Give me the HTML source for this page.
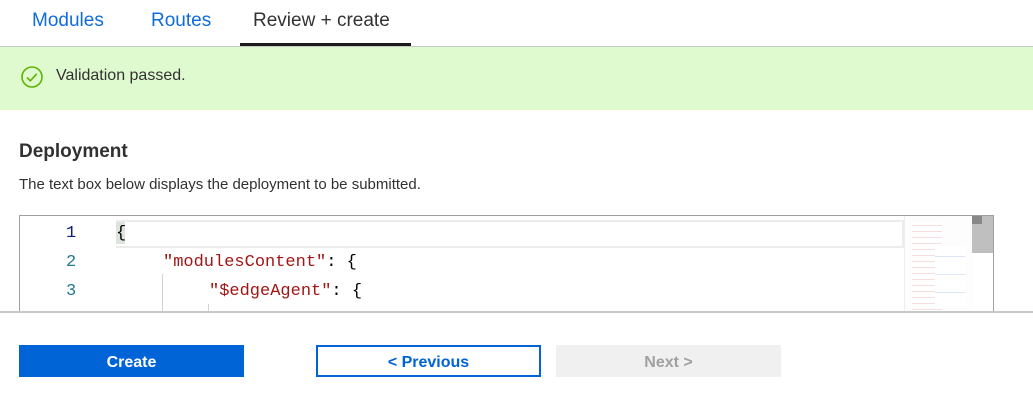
<!DOCTYPE html>
<html><head><style>
body{margin:0;width:1033px;height:405px;overflow:hidden;background:#fff;font-family:"Liberation Sans",sans-serif;position:relative}
.a{position:absolute}
.tab{position:absolute;top:10px;font-size:19px;color:#0f6cdb}
.mono{font-family:"Liberation Mono",monospace;font-size:17px}
.btn{font-weight:600}
</style></head><body>
<div class="tab" style="left:32px">Modules</div>
<div class="tab" style="left:151px">Routes</div>
<div class="tab" style="left:253px;color:#333">Review + create</div>
<div class="a" style="left:0;top:46px;width:1033px;height:1px;background:#c8c8c8"></div>
<div class="a" style="left:240px;top:43px;width:171px;height:3px;background:#1b1b1b"></div>
<div class="a" style="left:0;top:47px;width:1033px;height:63px;background:#e0fad0"></div>
<svg class="a" style="left:20px;top:65px" width="24" height="24"><circle cx="12" cy="12" r="10" fill="none" stroke="#5db300" stroke-width="1.6"/><path d="M7 12.5l3.3 3.3 6.5-7" fill="none" stroke="#5db300" stroke-width="1.6"/></svg>
<div class="a" style="left:56px;top:67px;font-size:16px;color:#323130">Validation passed.</div>
<div class="a" style="left:19px;top:141px;font-size:19px;font-weight:bold;color:#323130">Deployment</div>
<div class="a" style="left:19px;top:176px;font-size:15px;color:#323130">The text box below displays the deployment to be submitted.</div>
<div class="a" style="left:19px;top:215px;width:973px;height:97px;border:1px solid #a0a0a0;border-bottom:none;overflow:hidden">
 <div class="a" style="left:96px;top:4px;width:786px;height:24px;border:2px solid #ececec;border-left:none;background:#fff"></div>
 <div class="a" style="left:96px;top:6px;width:9px;height:22px;background:#dde4dd"></div>
 <div class="a mono" style="left:46px;top:8px;color:#0b216f">1</div>
 <div class="a mono" style="left:46px;top:37px;color:#237893">2</div>
 <div class="a mono" style="left:46px;top:66px;color:#237893">3</div>
 <div class="a mono" style="left:96px;top:8px;color:#000">{</div>
 <div class="a mono" style="left:143px;top:37px;color:#a31515">"modulesContent"<span style="color:#000">: {</span></div>
 <div class="a mono" style="left:189px;top:66px;color:#a31515">"$edgeAgent"<span style="color:#000">: {</span></div>
 <div class="a" style="left:142px;top:58px;width:1px;height:50px;background:#d3d3d3"></div>
 <div class="a" style="left:188px;top:88px;width:1px;height:20px;background:#d3d3d3"></div>
 <div class="a" style="left:884px;top:0;width:68px;height:97px;background:#fdfdfd;border-left:1px solid #eee"></div>
 <div class="a" style="left:952px;top:0;width:21px;height:37px;background:#bfbfbf"></div>
 <div class="a" style="left:952px;top:0;width:10px;height:8px;background:#888"></div>
 <div class="a" style="left:892px;top:6px;width:30px;height:90px;background:repeating-linear-gradient(#fff 0 3px,#f6dede 3px 4px,#fff 4px 6px)"></div>
 <div class="a" style="left:915px;top:30px;width:30px;height:60px;background:repeating-linear-gradient(#fff 0 10px,#dbe6f6 10px 11px,#fff 11px 18px)"></div>
</div>
<div class="a" style="left:0;top:311px;width:1033px;height:2px;background:#c8c8c8"></div>
<div class="a btn" style="left:19px;top:347px;width:225px;height:30px;background:#0063d6;color:#fff;font-size:16px;text-align:center;line-height:31px"></div>
<div class="a btn" style="left:19px;top:345px;width:225px;height:32px;background:#0063d6;color:#fff;font-size:16px;text-align:center;line-height:36px">Create</div>
<div class="a btn" style="left:316px;top:345px;width:221px;height:28px;border:2px solid #0063d6;color:#0063d6;font-size:16px;text-align:center;line-height:32px">&lt; Previous</div>
<div class="a btn" style="left:556px;top:345px;width:225px;height:32px;background:#f0f0f0;color:#a0a0a0;font-size:16px;text-align:center;line-height:36px">Next &gt;</div>
</body></html>
